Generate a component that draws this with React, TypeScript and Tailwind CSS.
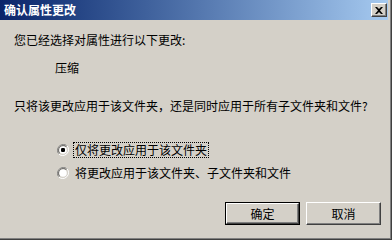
import React from "react";

const font = { fontFamily: '"Noto Sans CJK SC", "Noto Sans", sans-serif' };

function Radio({ checked }: { checked: boolean }) {
  return (
    <svg width="12" height="12" viewBox="0 0 12 12" className="shrink-0">
      <path d="M10.5 2.2 A5.5 5.5 0 1 0 2.2 10.5" stroke="#808080" strokeWidth="1" fill="none" />
      <path d="M9.6 3.1 A4.3 4.3 0 1 0 3.1 9.6" stroke="#404040" strokeWidth="1" fill="none" />
      <path d="M1.5 9.8 A5.5 5.5 0 0 0 9.8 1.5" stroke="#ffffff" strokeWidth="1" fill="none" />
      <path d="M2.6 8.9 A4.3 4.3 0 0 0 8.9 2.6" stroke="#d4d0c8" strokeWidth="1" fill="none" />
      <circle cx="6" cy="6" r="3.8" fill="#ffffff" />
      {checked && <rect x="4" y="4" width="4" height="4" rx="1.2" fill="#000" />}
    </svg>
  );
}

function Button({ label, isDefault }: { label: string; isDefault?: boolean }) {
  return (
    <div
      className={`w-[75px] h-[23px] ${isDefault ? "border border-black" : ""} bg-[#d4d0c8]`}
    >
      <div
        className={`w-full h-full flex items-center justify-center text-[12px] leading-[12px] text-black border-t border-l border-t-white border-l-white border-b border-r border-b-[#404040] border-r-[#404040] ${isDefault ? "" : ""}`}
      >
        <div className="w-full h-full flex items-center justify-center shadow-[inset_-1px_-1px_#808080]">
          {label}
        </div>
      </div>
    </div>
  );
}

export default function App() {
  return (
    <div
      className="w-[392px] h-[240px] bg-[#d4d0c8] flex flex-col pr-[4px] pb-[4px] shadow-[inset_-1px_-1px_#404040,inset_-2px_-2px_#808080] text-black"
      style={font}
    >
      <div className="h-[20px] w-full flex items-center justify-between bg-gradient-to-r from-[#0a246a] to-[#a6caf0] pl-[4px] pr-[1px]">
        <span className="text-white font-bold text-[12px] leading-[12px]">确认属性更改</span>
        <div className="w-[16px] h-[14px] bg-[#d4d0c8] border-t border-l border-t-white border-l-white border-b border-r border-b-[#404040] border-r-[#404040] flex items-center justify-center shadow-[inset_-1px_-1px_#808080]">
          <svg width="8" height="7" viewBox="0 0 8 7">
            <path d="M0 0h2l2 2 2-2h2L5 3.5 8 7H6L4 5 2 7H0l3-3.5z" fill="#000" />
          </svg>
        </div>
      </div>
      <div className="flex-1 flex flex-col pl-[14px] text-[12px] leading-[12px]">
        <div className="mt-[14px]">您已经选择对属性进行以下更改:</div>
        <div className="mt-[16px] pl-[41px]">压缩</div>
        <div className="mt-[26px]">只将该更改应用于该文件夹，还是同时应用于所有子文件夹和文件?</div>
        <div className="mt-[30px] pl-[43px] flex items-center gap-[4px]">
          <Radio checked />
          <span className="border border-dotted border-black px-[1px] py-[1px]">仅将更改应用于该文件夹</span>
        </div>
        <div className="mt-[8px] pl-[43px] flex items-center gap-[5px]">
          <Radio checked={false} />
          <span className="py-[1px] pl-[1px]">将更改应用于该文件夹、子文件夹和文件</span>
        </div>
        <div className="mt-auto mb-[11px] flex justify-end gap-[6px] pr-[7px]">
          <Button label="确定" isDefault />
          <Button label="取消" />
        </div>
      </div>
    </div>
  );
}
